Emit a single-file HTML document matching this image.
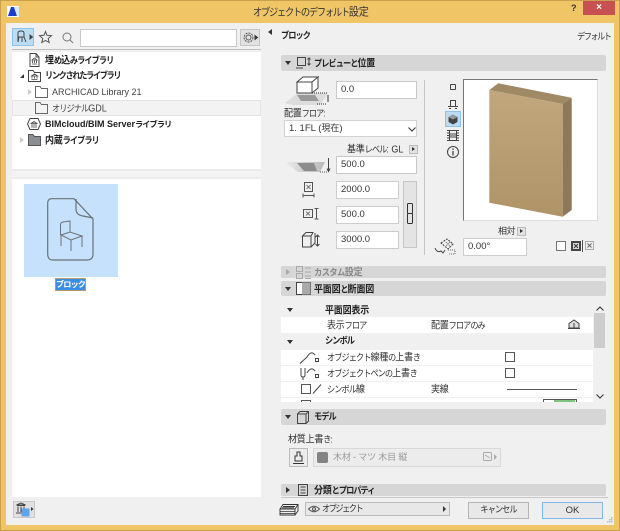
<!DOCTYPE html>
<html><head><meta charset="utf-8">
<style>
html,body{margin:0;padding:0}
body{width:620px;height:531px;position:relative;overflow:hidden;background:#efc566;font-family:"Liberation Sans","Noto Sans CJK JP",sans-serif;font-size:9px;color:#222}
#r{position:absolute;left:0;top:0;width:620px;height:531px;filter:blur(.3px)}
.a{position:absolute}
.t{position:absolute;white-space:nowrap;line-height:12px}
.k{font-size:8.2px;letter-spacing:-.95px;transform:scaleY(1.14)}
.k i,.i{font-style:normal;font-size:9px;letter-spacing:-.2px}
.b{font-weight:bold}
.in{position:absolute;background:#fff;border:1px solid #c9c9c9;box-sizing:border-box;font-size:9.5px;line-height:16px;padding-left:4px;color:#333;white-space:nowrap}
.sec{position:absolute;left:281px;width:325px;background:#d6d6d6;border-radius:2px}
.tri{position:absolute;width:0;height:0}
.dn{border-left:3px solid transparent;border-right:3px solid transparent;border-top:4px solid #333}
.ic{position:absolute;overflow:visible}
</style></head><body><div id="r">
<div class="a" style="left:0;top:0;width:620px;height:531px;border:1px solid #c9a04e;box-sizing:border-box"></div>
<svg class="ic" style="left:7px;top:6px" width="12" height="11"><rect width="12" height="11" fill="#fff"/><path d="M1 10L4 1H7L10 10Z" fill="#1a3fd0"/><path d="M7 1L10 10H12V1Z" fill="#dfe6f8"/></svg>
<div class="t" style="left:253px;top:5px;font-size:9.2px;letter-spacing:-1.2px;line-height:14px;color:#333;transform:scaleY(1.14)">オブジェクトのデフォルト<span style="font-size:10px;letter-spacing:0">設定</span></div>
<div class="t b" style="left:571px;top:2px;font-size:9px;color:#333">?</div>
<div class="a" style="left:583px;top:1px;width:32px;height:14px;background:#c75050;color:#fff;text-align:center;font-size:10px;line-height:14px;font-weight:bold">×</div>

<div class="a" style="left:6px;top:23px;width:608px;height:502px;background:#f0f0f0"></div>

<!-- left toolbar -->
<div class="a" style="left:12px;top:28px;width:22px;height:18px;background:#bcdcf4;border:1px solid #8ec4ec;box-sizing:border-box"></div>
<svg class="ic" style="left:15px;top:29px" width="20" height="16" fill="none" stroke="#444" stroke-width="1"><path d="M3 13V4Q3 2 6 2T9 4V8H3M4 8L3 13M9 8L11 13M7 8V13"/><path d="M15 6V10L17.500 8Z" fill="#444"/></svg>
<svg class="ic" style="left:39px;top:31px" width="14" height="14" fill="none" stroke="#555"><path d="M6.500 .5L8 4.300L12.500 4.700L9.200 7.500L10.200 11.500L6.500 9.400L2.800 11.500L3.800 7.500L.5 4.700L5 4.300Z"/></svg>
<svg class="ic" style="left:62px;top:32px" width="12" height="13" fill="none" stroke="#777"><circle cx="5" cy="5" r="4"/><path d="M8 8L11 11"/></svg>
<div class="in" style="left:80px;top:29px;width:157px;height:18px"></div>
<div class="a" style="left:240px;top:29px;width:20px;height:17px;background:#e2e2e2;border:1px solid #c4c4c4;box-sizing:border-box"></div>
<svg class="ic" style="left:242px;top:31px" width="18" height="13" fill="none" stroke="#555"><circle cx="6.500" cy="6.500" r="4.500" stroke-dasharray="2 1"/><circle cx="6.500" cy="6.500" r="2.500"/><path d="M13 4.500V8.500L15.500 6.500Z" fill="#333" stroke="#333"/></svg>
<div class="a" style="left:12px;top:49px;width:249px;height:1px;background:#c0c0c0"></div>

<!-- library list -->
<div class="a" style="left:12px;top:52px;width:249px;height:117px;background:#fff"></div>
<div class="a" style="left:12px;top:100px;width:249px;height:16px;background:#f3f3f3;border:1px solid #e4e4e4;box-sizing:border-box"></div>
<svg class="ic" style="left:29px;top:53px" width="11" height="14" fill="none" stroke="#444"><path d="M1 .5H7L10 4V13.500H1ZM7 .5V4H10"/><path d="M3 11H8M3.500 10V7.500M5.500 10V7.500M7.500 10V7.500M3 7L5.500 5L8 7Z" stroke-width=".8"/></svg>
<div class="t b k" style="left:45px;top:54px"><i>埋</i>め<i>込</i>みライブラリ</div>
<div class="tri" style="left:20px;top:74px;border-bottom:4px solid #333;border-left:4px solid transparent"></div>
<svg class="ic" style="left:28px;top:70px" width="13" height="12" fill="none" stroke="#444"><path d="M.5 11.500V.5H5L6.500 2.500H12.500V11.500Z"/><path d="M3.500 9.500H9.500M4 8.500V6.500M6.500 8.500V6.500M9 8.500V6.500M3.500 6L6.500 4L9.500 6Z" stroke-width=".8"/></svg>
<div class="t b k" style="left:45px;top:70px;letter-spacing:-1.35px">リンクされたライブラリ</div>
<div class="tri" style="left:28px;top:89px;border-top:3px solid transparent;border-bottom:3px solid transparent;border-left:4px solid #ccc"></div>
<svg class="ic" style="left:35px;top:86px" width="13" height="12" fill="none" stroke="#666"><path d="M.5 11.500V.5H5L6.500 2.500H12.500V11.500Z"/></svg>
<div class="t" style="left:52px;top:86px;color:#444">ARCHICAD Library 21</div>
<svg class="ic" style="left:35px;top:102px" width="13" height="12" fill="none" stroke="#666"><path d="M.5 11.500V.5H5L6.500 2.500H12.500V11.500Z"/></svg>
<div class="t k" style="left:52px;top:102px;color:#444">オリジナル<i style="letter-spacing:0">GDL</i></div>
<svg class="ic" style="left:27px;top:118px" width="14" height="12" fill="none" stroke="#444"><path d="M3 .5H11L13.500 6L11 11.500H3L.5 6Z"/><path d="M4 9H10M5 8V6M7 8V6M9 8V6M4 5.500L7 3.500L10 5.500Z" stroke-width=".8"/></svg>
<div class="t b k" style="left:45px;top:118px;transform:none"><i style="letter-spacing:0">BIMcloud/BIM Server</i>ライブラリ</div>
<div class="tri" style="left:20px;top:137px;border-top:3px solid transparent;border-bottom:3px solid transparent;border-left:4px solid #ccc"></div>
<svg class="ic" style="left:28px;top:134px" width="13" height="12"><path d="M.5 11.500V.5H5L6.500 2.500H12.500V11.500Z" fill="#8b8f93" stroke="#555"/></svg>
<div class="t b k" style="left:45px;top:134px"><i>内蔵</i>ライブラリ</div>

<div class="a" style="left:12px;top:169px;width:249px;height:2px;background:#ebebeb"></div>
<div class="a" style="left:12px;top:171px;width:249px;height:6px;background:#f4f4f4"></div>
<div class="a" style="left:12px;top:177px;width:249px;height:2px;background:#ebebeb"></div>
<div class="a" style="left:12px;top:179px;width:249px;height:318px;background:#fff"></div>

<!-- object tile -->
<div class="a" style="left:24px;top:184px;width:94px;height:93px;background:#c5e1fb"></div>
<svg class="ic" style="left:47px;top:198px" width="47" height="64" fill="none" stroke="#6b7278"><path d="M5 .7H27L46 21V56Q46 62 40 62H6Q.7 62 .7 56V5Q.7 .7 5 .7Z" stroke-width="1.200"/><path d="M29 1V11Q29 17 36 18L46 20" stroke-width="1.200"/><path d="M13.500 37V27Q13.500 24.500 16 24L23 23V34M14 37L23 34L35 38L24 42ZM14 37V48M24 42V53M35 38V49" stroke-width="1"/></svg>
<div class="t b" style="left:55px;top:278px;width:31px;height:13px;background:#3a8ee6;border:1px solid #b79a6c;box-sizing:border-box;color:#fff;text-align:center;line-height:11px;font-size:8.200px;letter-spacing:-.95px">ブロック</div>

<!-- bottom left -->
<div class="a" style="left:13px;top:501px;width:22px;height:17px;background:#e1e1e1;border:1px solid #c8c8c8;box-sizing:border-box"></div>
<svg class="ic" style="left:15px;top:502px" width="20" height="16" fill="none" stroke="#444"><path d="M1 11H11M2 3.500H10M3 10V4.500M6 10V4.500M9 10V4.500M1.500 3L6 1L10.500 3Z"/><rect x="7" y="7" width="7" height="7" fill="#5ea4ef" stroke="#5ea4ef"/><path d="M16 5V9L18.500 7Z" fill="#333" stroke="none"/></svg>

<!-- right panel -->
<div class="tri" style="left:268px;top:29px;border-top:3px solid transparent;border-bottom:3px solid transparent;border-right:4px solid #333"></div>
<div class="t b k" style="left:281px;top:30px">ブロック</div>
<div class="t k" style="left:577px;top:31px;color:#333;letter-spacing:-1.5px">デフォルト</div>

<div class="sec" style="top:55px;height:16px"></div>
<div class="tri dn" style="left:285px;top:61px"></div>
<svg class="ic" style="left:296px;top:57px" width="16" height="13" fill="none" stroke="#444"><rect x="1.500" y=".5" width="8" height="8"/><path d="M0 11H7M13 1V8M11.500 2.500L13 1L14.500 2.500M11.500 6.500L13 8L14.500 6.500"/></svg>
<div class="t b k" style="left:314px;top:57px">プレビューと<i>位置</i></div>

<!-- position controls -->
<svg class="ic" style="left:284px;top:75px" width="48" height="32" fill="none"><path d="M14 18H44L36 30H9L1 28Z" fill="#dcdcdc"/><path d="M13 20H31L35 26H17Z" fill="#999"/><path d="M13 7L19 2H34L28 7ZM13 7V18H28V7M28 7L34 2V13L28 18" fill="#fff" stroke="#444"/><path d="M28 18H43M33 29H42" stroke="#333" stroke-dasharray="1 1"/><path d="M44 20V27" stroke="#333"/></svg>
<div class="in" style="left:336px;top:81px;width:81px;height:18px">0.0</div>
<div class="t k" style="left:284px;top:107px;color:#333"><i>配置</i>フロア:</div>
<div class="in" style="left:284px;top:120px;width:133px;height:17px;border-color:#d2d2d2;line-height:15px">1. 1FL (<span style="font-size:9px">現在</span>)</div>
<svg class="ic" style="left:408px;top:127px" width="8" height="5" fill="none" stroke="#444" stroke-width="1.200"><path d="M.5 .5L4 4L7.500 .5"/></svg>
<div class="t k" style="left:347px;top:143px;color:#333"><i>基準</i>レベル<i style="letter-spacing:0">: GL</i></div>
<div class="a" style="left:409px;top:145px;width:9px;height:9px;background:#e2e2e2;border:1px solid #bbb;box-sizing:border-box"></div>
<div class="tri" style="left:412px;top:147px;border-top:2px solid transparent;border-bottom:2px solid transparent;border-left:3px solid #333"></div>
<svg class="ic" style="left:284px;top:156px" width="49" height="20" fill="none"><defs><linearGradient id="g" x1="0" x2="1" y1="0" y2="0"><stop offset="0" stop-color="#eee"/><stop offset=".5" stop-color="#ccc"/><stop offset="1" stop-color="#bbb"/></linearGradient></defs><path d="M1 6H41L36 16H14Z" fill="url(#g)"/><path d="M13 7H30L33 15H20Z" fill="#8c8c8c"/><path d="M36 16H44" stroke="#555" stroke-dasharray="1 1"/><path d="M44.500 2V15M43 12.500L44.500 15.500L46 12.500" stroke="#444"/></svg>
<div class="in" style="left:336px;top:156px;width:81px;height:18px">500.0</div>
<svg class="ic" style="left:303px;top:182px" width="12" height="16" fill="none" stroke="#555"><rect x="1.500" y=".5" width="8" height="9"/><path d="M3.500 3L7.500 7M7.500 3L3.500 7" stroke-width=".8"/><path d="M0 13.500H11M0 11.500V15.500M11 11.500V15.500"/></svg>
<div class="in" style="left:336px;top:181px;width:63px;height:18px;border-color:#cdcdcd">2000.0</div>
<svg class="ic" style="left:303px;top:208px" width="17" height="12" fill="none" stroke="#555"><rect x=".5" y="1.500" width="9" height="8"/><path d="M3 3.500L7 7.500M7 3.500L3 7.500" stroke-width=".8"/><path d="M13.500 1V11M11.500 .5H15.500M11.500 11H15.500"/></svg>
<div class="in" style="left:336px;top:206px;width:63px;height:18px;border-color:#cdcdcd">500.0</div>
<svg class="ic" style="left:302px;top:232px" width="18" height="16" fill="none" stroke="#444"><path d="M.5 4L4 .5H11L9 4H.5ZM.5 4V15H9V4M9 15L13 11V1"/><path d="M15.500 4V13M13.500 5L15.500 3L17.500 5M13.500 12L15.500 14L17.500 12"/></svg>
<div class="in" style="left:336px;top:231px;width:63px;height:18px;border-color:#cdcdcd">3000.0</div>
<div class="a" style="left:403px;top:181px;width:14px;height:67px;background:#e4e4e4;border:1px solid #c6c6c6;box-sizing:border-box"></div>
<svg class="ic" style="left:406px;top:203px" width="8" height="22" fill="none" stroke="#333"><rect x="1.500" y=".5" width="5" height="10" rx="1"/><rect x="1.500" y="10.500" width="5" height="10" rx="1"/></svg>
<div class="a" style="left:424px;top:80px;width:1px;height:175px;background:#c4c4c4"></div>

<!-- view icons -->
<svg class="ic" style="left:449px;top:83px" width="8" height="8" fill="none" stroke="#444"><rect x="1.500" y="1.500" width="5" height="5" rx=".5"/></svg>
<svg class="ic" style="left:448px;top:99px" width="10" height="10" fill="none" stroke="#444"><path d="M2.500 7V1.500H7.500V7M0 7.500H10M1 9.500H3M7 9.500H9"/></svg>
<div class="a" style="left:445px;top:111px;width:16px;height:16px;background:#bcdcf4;border:1px solid #8ec4ec;box-sizing:border-box"></div>
<svg class="ic" style="left:448px;top:114px" width="10" height="11"><path d="M5 .5L9.500 3V8L5 10.500L.5 8V3Z" fill="#444"/><path d="M5 .5L9.500 3L5 5.500L.5 3Z" fill="#999"/></svg>
<svg class="ic" style="left:447px;top:130px" width="12" height="11" fill="none" stroke="#444"><path d="M0 .5H12M0 10.500H12M2.500 .5V10.500M9.500 .5V10.500"/><rect x="3" y="3" width="6" height="5" fill="#999" stroke="none"/><path d="M0 3H2M0 5.500H2M0 8H2M10 3H12M10 5.500H12M10 8H12"/></svg>
<svg class="ic" style="left:447px;top:146px" width="12" height="12" fill="none" stroke="#444"><circle cx="6" cy="6" r="5.500"/><path d="M6 5V9.500M6 2.500V4" stroke-width="1.300"/></svg>

<!-- preview -->
<div class="a" style="left:463px;top:79px;width:135px;height:142px;background:#fff;border-top:1px solid #777;border-left:1px solid #777;border-right:1px solid #ddd;border-bottom:1px solid #ddd;box-sizing:border-box"></div>
<svg class="ic" style="left:463px;top:79px" width="135" height="142"><defs><linearGradient id="w" x1="0" y1="0" x2="0" y2="1"><stop offset="0" stop-color="#c2a67c"/><stop offset="1" stop-color="#af9468"/></linearGradient></defs><path d="M26.300 11L35.300 4.300L108.700 18.700L99.700 25Z" fill="#a08a66"/><path d="M26.300 11L99.700 25V137.700L26.300 123.700Z" fill="url(#w)"/><path d="M99.700 25L108.700 18.700V131L99.700 137.700Z" fill="#8e7859"/></svg>

<div class="t" style="left:498px;top:225px;color:#333;letter-spacing:-.5px">相対</div>
<div class="a" style="left:517px;top:227px;width:9px;height:9px;background:#e2e2e2;border:1px solid #bbb;box-sizing:border-box"></div>
<div class="tri" style="left:520px;top:229px;border-top:2px solid transparent;border-bottom:2px solid transparent;border-left:3px solid #333"></div>
<svg class="ic" style="left:434px;top:238px" width="22" height="17" fill="none" stroke="#444"><path d="M1 10Q3 15 7 13L9 15L11 12"/><path d="M7 5L13 1L19 6L14 11Z" stroke-dasharray="2 1"/><path d="M12 4L16 8M16 4L12 8M14 12H21V16H14" stroke-width=".8" stroke-dasharray="1 1"/></svg>
<div class="in" style="left:463px;top:238px;width:64px;height:18px;border-color:#cdcdcd">0.00°</div>
<div class="a" style="left:556px;top:241px;width:10px;height:10px;background:#fff;border:1px solid #777;box-sizing:border-box"></div>
<svg class="ic" style="left:571px;top:241px" width="10" height="10"><rect width="10" height="10" fill="#444"/><rect x="2" y="2" width="6" height="6" fill="#ddd"/><path d="M3 3L7 7M7 3L3 7" stroke="#333"/></svg>
<div class="a" style="left:582px;top:240px;width:1px;height:12px;background:#555"></div>
<svg class="ic" style="left:585px;top:241px" width="10" height="10" fill="none" stroke="#666"><rect x=".5" y=".5" width="8" height="8" stroke-dasharray="1 1"/><path d="M2.500 2.500L6.500 6.500M6.500 2.500L2.500 6.500"/></svg>

<div class="sec" style="top:266px;height:12px"></div>
<div class="tri" style="left:286px;top:269px;border-top:3px solid transparent;border-bottom:3px solid transparent;border-left:4px solid #aaa"></div>
<svg class="ic" style="left:296px;top:266px" width="16" height="13" fill="none" stroke="#aaa"><rect x=".5" y=".5" width="6" height="5"/><rect x=".5" y="7.500" width="6" height="5"/><path d="M9 2H15M9 6H15M9 10H15M9 12.500H15"/></svg>
<div class="t k b" style="left:314px;top:266px;color:#888"><span style="letter-spacing:-.5px">カスタム</span><i>設定</i></div>

<div class="sec" style="top:281px;height:15px"></div>
<div class="tri dn" style="left:285px;top:287px"></div>
<svg class="ic" style="left:296px;top:282px" width="15" height="13"><rect x=".5" y=".5" width="14" height="12" fill="#fff" stroke="#444"/><path d="M6 .5L14.500 .5V12.500H6Z" fill="#aaa"/></svg>
<div class="t b k" style="left:314px;top:283px"><i>平面図</i>と<i>断面図</i></div>

<!-- table -->
<div class="a" style="left:281px;top:302px;width:325px;height:100px;overflow:hidden">
<div class="a" style="left:0;top:0;width:312px;height:15px;background:#f0f0f0"></div>
<div class="tri dn" style="left:6px;top:6px"></div>
<div class="t b k" style="left:44px;top:2px"><i>平面図表示</i></div>
<div class="a" style="left:0;top:15px;width:312px;height:16px;background:#fff"></div>
<div class="t k" style="left:46px;top:17px;color:#333"><i>表示</i>フロア</div>
<div class="t k" style="left:150px;top:17px;color:#333"><i>配置</i>フロアのみ</div>
<svg class="ic" style="left:287px;top:17px" width="12" height="12" fill="none" stroke="#444"><path d="M1 4.500L6 1L11 4.500V9H1ZM0 9.500H12" fill="#ddd"/><path d="M6 4V9" /></svg>
<div class="tri dn" style="left:6px;top:38px"></div>
<div class="t b k" style="left:44px;top:33px">シンボル</div>
<div class="a" style="left:0;top:48px;width:312px;height:15px;background:#fff"></div>
<svg class="ic" style="left:19px;top:49px" width="21" height="14" fill="none" stroke="#444"><path d="M0 12.500L7 6M7 6Q11 -1 15 4"/><rect x="15.500" y="7.500" width="3" height="3"/></svg>
<div class="t k" style="left:46px;top:49px;color:#333">オブジェクト<i>線種</i>の<i>上書</i>き</div>
<div class="a" style="left:224px;top:50px;width:10px;height:10px;background:#fff;border:1px solid #555;box-sizing:border-box"></div>
<div class="a" style="left:0;top:64px;width:312px;height:15px;background:#fff"></div>
<svg class="ic" style="left:19px;top:65px" width="21" height="14" fill="none" stroke="#444"><path d="M1 1V8Q1 10 3 10T5 8V1M3 10V13M7 6Q11 -1 15 4"/><rect x="15.500" y="7.500" width="3" height="3"/></svg>
<div class="t k" style="left:46px;top:65px;color:#333">オブジェクトペンの<i>上書</i>き</div>
<div class="a" style="left:224px;top:66px;width:10px;height:10px;background:#fff;border:1px solid #555;box-sizing:border-box"></div>
<div class="a" style="left:0;top:80px;width:312px;height:15px;background:#fff"></div>
<div class="a" style="left:20px;top:82px;width:10px;height:10px;background:#fff;border:1px solid #555;box-sizing:border-box"></div>
<svg class="ic" style="left:32px;top:82px" width="9" height="10" fill="none" stroke="#444"><path d="M0 9.500L8 .5"/></svg>
<div class="t k" style="left:46px;top:81px;color:#333">シンボル<i>線</i></div>
<div class="t k" style="left:150px;top:81px;color:#333"><i>実線</i></div>
<div class="a" style="left:226px;top:87px;width:70px;height:1px;background:#555"></div>
<div class="a" style="left:0;top:96px;width:312px;height:4px;background:#fff"></div>
<div class="a" style="left:20px;top:98px;width:10px;height:6px;border:1px solid #555;box-sizing:border-box"></div>
<div class="a" style="left:262px;top:97px;width:34px;height:6px;background:#fff;border:1px solid #555;box-sizing:border-box"></div>
<div class="a" style="left:273px;top:98px;width:21px;height:3px;background:#7dc47d"></div>
<div class="a" style="left:313px;top:0;width:12px;height:100px;background:#f0f0f0"></div>
<div class="a" style="left:313px;top:11px;width:11px;height:35px;background:#cdcdcd"></div>
<svg class="ic" style="left:315px;top:4px" width="8" height="5" fill="none" stroke="#444" stroke-width="1.200"><path d="M.5 4.500L4 1L7.500 4.500"/></svg>
<svg class="ic" style="left:315px;top:92px" width="8" height="5" fill="none" stroke="#444" stroke-width="1.200"><path d="M.5 .5L4 4L7.500 .5"/></svg>
</div>

<div class="sec" style="top:409px;height:16px"></div>
<div class="tri dn" style="left:285px;top:415px"></div>
<svg class="ic" style="left:297px;top:411px" width="12" height="13" fill="none" stroke="#444"><path d="M.5 3L3 .5H11.500V10L9 12.500H.5ZM.5 3H9V12.500M9 3L11.500 .5"/></svg>
<div class="t b k" style="left:314px;top:411px">モデル</div>
<div class="t k" style="left:288px;top:433px;color:#333"><i>材質上書</i>き:</div>
<div class="a" style="left:289px;top:448px;width:19px;height:19px;background:#ececec;border:1px solid #bbb;box-sizing:border-box"></div>
<svg class="ic" style="left:293px;top:451px" width="11" height="14" fill="none" stroke="#333"><path d="M4 1H7V5H9V10H2V5H4ZM0 12.500H11"/></svg>
<div class="a" style="left:313px;top:448px;width:188px;height:19px;background:#ececec;border:1px solid #d8d8d8;box-sizing:border-box"></div>
<div class="a" style="left:317px;top:452px;width:11px;height:11px;background:#838383;border-radius:2px"></div>
<div class="t" style="left:333px;top:451px;color:#999;font-size:9px;letter-spacing:-.15px">木材 - マツ 木目 縦</div>
<svg class="ic" style="left:483px;top:451px" width="15" height="12" fill="none" stroke="#aaa"><rect x=".5" y="1.500" width="8" height="8" rx="1"/><path d="M2 4L7 7"/><path d="M11 3V9L14 6Z" fill="#aaa" stroke="none"/></svg>

<div class="sec" style="top:484px;height:12px"></div>
<div class="tri" style="left:286px;top:487px;border-top:3px solid transparent;border-bottom:3px solid transparent;border-left:4px solid #333"></div>
<svg class="ic" style="left:298px;top:484px" width="10" height="12" fill="none" stroke="#444"><rect x=".5" y=".5" width="9" height="11"/><path d="M2.500 3H7.500M2.500 6H7.500M2.500 9H7.500"/></svg>
<div class="t b k" style="left:314px;top:484px"><i>分類</i>とプロパティ</div>
<div class="a" style="left:281px;top:497px;width:327px;height:1px;background:#c8c8c8"></div>

<!-- footer -->
<svg class="ic" style="left:279px;top:504px" width="20" height="12" fill="none" stroke="#333"><path d="M4 .5H19L16 5H1ZM1 5V11H16V5M16 11L19 7V1M4 2.500H16M3 3.800H15" stroke-width=".9"/><path d="M1 7.500H16M1 9.500H16" stroke-width=".8"/></svg>
<div class="a" style="left:305px;top:502px;width:145px;height:14px;background:#e8e8e8;border:1px solid #bcbcbc;box-sizing:border-box"></div>
<svg class="ic" style="left:308px;top:505px" width="12" height="8" fill="none" stroke="#555"><path d="M.5 4Q6 -1.500 11.500 4Q6 9.500 .5 4Z"/><circle cx="6" cy="4" r="1.500"/></svg>
<div class="t k" style="left:322px;top:503px;color:#333;letter-spacing:-1.5px">オブジェクト</div>
<div class="tri" style="left:443px;top:506px;border-top:3px solid transparent;border-bottom:3px solid transparent;border-left:3px solid #333"></div>
<div class="a" style="left:468px;top:502px;width:61px;height:17px;background:#e8e8e8;border:1px solid #b5b5b5;box-sizing:border-box"></div>
<div class="t k" style="left:468px;width:61px;top:504px;text-align:center;color:#333">キャンセル</div>
<div class="a" style="left:542px;top:502px;width:61px;height:17px;background:#e8e8e8;border:1px solid #7fb9ec;box-sizing:border-box;text-align:center;line-height:15px;color:#333;font-size:9.5px">OK</div>
<svg class="ic" style="left:607px;top:517px" width="6" height="6" fill="#bbb"><rect x="4" y="0" width="1.500" height="1.500"/><rect x="2" y="2" width="1.500" height="1.500"/><rect x="4" y="2" width="1.500" height="1.500"/><rect x="0" y="4" width="1.500" height="1.500"/><rect x="2" y="4" width="1.500" height="1.500"/><rect x="4" y="4" width="1.500" height="1.500"/></svg>
</div></body></html>
